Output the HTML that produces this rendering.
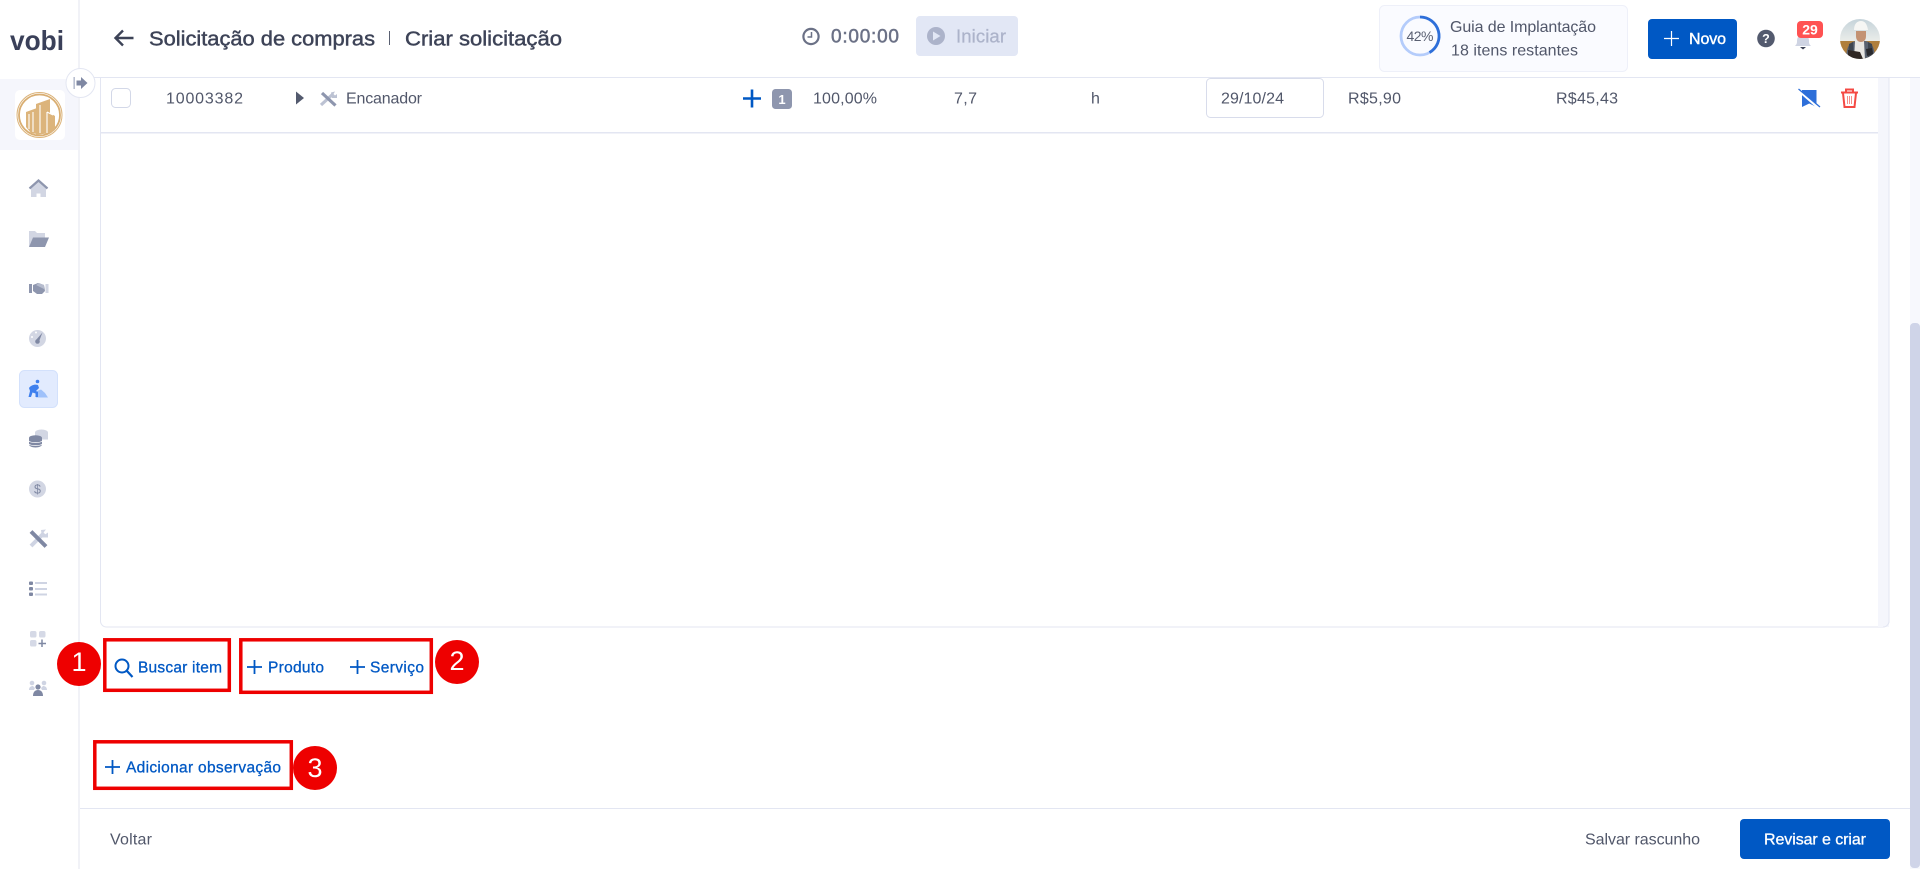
<!DOCTYPE html>
<html lang="pt-BR">
<head>
<meta charset="utf-8">
<title>Solicitação de compras</title>
<style>
html,body{margin:0;padding:0;width:1920px;height:869px;overflow:hidden;background:#fff}
svg{display:block}
text{font-family:"Liberation Sans",sans-serif;white-space:pre}
.t{font-size:16px;fill:#51576a}
.m{stroke-width:.45px}
.b{font-size:15.500px;fill:#0058c4;stroke:#0058c4;stroke-width:.3px}
.n{font-size:27px;fill:#fff;text-anchor:middle}
</style>
</head>
<body>
<svg width="1920" height="869" viewBox="0 0 1920 869" xmlns="http://www.w3.org/2000/svg">
<rect width="1920" height="869" fill="#fff"/>

<!-- sidebar -->
<rect x="78" y="0" width="2" height="869" fill="#f1f2f7"/>
<rect x="0" y="79" width="78" height="71" fill="#f5f6fc"/>
<text x="10" y="50" font-size="28" font-weight="bold" fill="#3a4059" textLength="54" lengthAdjust="spacingAndGlyphs">vobi</text>

<!-- company logo -->
<rect x="15" y="90" width="50" height="50" rx="5" fill="#fff"/>
<circle cx="39.500" cy="115" r="22.500" fill="none" stroke="#dcb47b" stroke-width="1"/>
<circle cx="39.500" cy="115" r="20.500" fill="none" stroke="#d9ae72" stroke-width="1.800"/>
<path d="M26 112l11-4 0 26-6-1-5-6zM36 104l14-5v14l5 3v14l-5 3-14 2z" fill="#dcb47b"/>
<path d="M29 114v15M33 112v20M40 105v28M47 112l6 3M47 112v21" stroke="#fff" stroke-width="1.100" fill="none"/>

<!-- sidebar icons -->
<g>
<path d="M31 187l7.500-6.500 7.500 6.500v10h-15z" fill="#d2d6e3"/>
<path d="M29.500 188.500l9-8 9 8" fill="none" stroke="#8e96ae" stroke-width="2.200"/>
<path d="M36.500 197v-3.500h4v3.500z" fill="#fff"/>
<path d="M29 231h6l2 2h8v5H33l-4 9z" fill="#d2d6e3"/>
<path d="M33 237.500h16l-4 9.500H29z" fill="#8e96ae"/>
<path d="M29 284h3v9h-3z" fill="#8e96ae"/><path d="M45.500 284h3v9h-3z" fill="#d2d6e3"/>
<path d="M33 285l5-2 6 2 1 6-3 3-5 0-4-3z" fill="#8e96ae"/>
<path d="M36 285l3-2 5 2v4l-4-2z" fill="#b5bbcd"/>
<circle cx="37.500" cy="338.500" r="8.500" fill="#d2d6e3"/>
<path d="M42.500 332.500l-3.500 9-3-1.500z" fill="#7f88a3"/><circle cx="37.500" cy="341.500" r="2.300" fill="#7f88a3"/>
<circle cx="32" cy="337" r="1" fill="#fff"/><circle cx="36" cy="332.500" r="1" fill="#fff"/>
<rect x="19.500" y="370.500" width="38" height="37" rx="5" fill="#e2ebfe" stroke="#d3e1fc"/>
<path d="M37 391l4-1.500 4 3.500 3 4.500H36z" fill="#9fc1fa"/>
<circle cx="37.500" cy="381.500" r="1.800" fill="#3f80ee"/>
<path d="M29 388c2-3 6-4 9-3l1 3-3 3 2 1v5h-2.500v-3.500l-3-1-1.500 4.500H28.500l1.500-6z" fill="#3f80ee"/>
<ellipse cx="41.500" cy="432.500" rx="6.500" ry="3" fill="#d2d6e3"/><rect x="35" y="432.500" width="13" height="7" fill="#d2d6e3"/>
<ellipse cx="35.500" cy="438" rx="6.500" ry="2.800" fill="#7f88a3"/>
<path d="M29 438v6.500c0 1.500 3 3 6.500 3s6.500-1.500 6.500-3V438" fill="#7f88a3"/>
<path d="M29 441c1 2 12 2 13 0M29 444c1 2 12 2 13 0" stroke="#fff" fill="none" stroke-width=".8"/>
<circle cx="37.500" cy="489" r="8.500" fill="#d2d6e3"/>
<text x="37.500" y="493.500" font-size="12.500" fill="#7f88a3" text-anchor="middle">$</text>
<path d="M31 546l13-13" stroke="#cfd4e3" stroke-width="4"/>
<path d="M41 530l5-.5-2.500 3 1.500 2 3-2 0 5-6 0z" fill="#cfd4e3"/>
<path d="M31 531.500l15 15" stroke="#7f88a3" stroke-width="4"/>
<rect x="29" y="581.500" width="4" height="3.500" rx="1" fill="#7f88a3"/><rect x="29" y="587" width="4" height="3.500" rx="1" fill="#7f88a3"/><rect x="29" y="592.500" width="4" height="3.500" rx="1" fill="#7f88a3"/>
<path d="M35 583h12M35 589h12M35 594.500h12" stroke="#cfd4e3" stroke-width="2"/>
<rect x="30" y="631" width="6.500" height="6.500" rx="1.800" fill="#d5d9e6"/><rect x="39" y="631" width="6.500" height="6.500" rx="1.800" fill="#d5d9e6"/>
<rect x="30" y="640" width="6.500" height="6.500" rx="1.800" fill="#d5d9e6"/>
<path d="M42 639.500v7.500M38.500 643.500h7.500" stroke="#7f88a3" stroke-width="1.500"/>
<circle cx="32" cy="683" r="2.300" fill="#cfd4e3"/><circle cx="44" cy="683" r="2.300" fill="#cfd4e3"/>
<path d="M29 690c0-3 2-4 4-4l2 2-1 2zM47 690c0-3-2-4-4-4l-2 2 1 2z" fill="#cfd4e3"/>
<circle cx="38" cy="687" r="2.600" fill="#7f88a3"/>
<path d="M33 696c0-4 2-6 5-6s5 2 5 6z" fill="#7f88a3"/>
</g>

<!-- header -->
<rect x="80" y="77" width="1840" height="1" fill="#e3e6f2"/>
<path d="M133.500 38h-17M123 30.500l-7.500 7.500 7.500 7.500" fill="none" stroke="#3d4357" stroke-width="2.400"/>
<text x="149" y="45.500" font-size="20.500" fill="#3d4357" stroke="#3d4357" class="m" textLength="226" lengthAdjust="spacingAndGlyphs">Solicitação de compras</text>
<rect x="389" y="31" width="1" height="14" fill="#5a6072"/>
<text x="405" y="45.500" font-size="20.500" fill="#3d4357" stroke="#3d4357" class="m" textLength="157" lengthAdjust="spacingAndGlyphs">Criar solicitação</text>

<circle cx="811" cy="36.500" r="7.600" fill="none" stroke="#6b7186" stroke-width="2.200"/>
<path d="M811.500 32v5h-4" fill="none" stroke="#6b7186" stroke-width="1.500"/>
<text x="831" y="42.500" font-size="19" fill="#6b7186" stroke="#6b7186" stroke-width=".5" textLength="68" lengthAdjust="spacing">0:00:00</text>
<rect x="916" y="16" width="102" height="40" rx="4" fill="#e2e7f5"/>
<circle cx="936" cy="36" r="9" fill="#acb3ca"/>
<path d="M933 31.500l7.500 4.500-7.500 4.500z" fill="#e2e7f5"/>
<text x="956" y="42.500" font-size="18.500" fill="#acb3ca" stroke="#acb3ca" stroke-width=".25" textLength="50" lengthAdjust="spacing">Iniciar</text>

<rect x="1379.500" y="5.500" width="248" height="66" rx="5" fill="#fafbff" stroke="#eef0f9"/>
<circle cx="1420" cy="36" r="19" fill="none" stroke="#b4ccfb" stroke-width="2.800"/>
<path d="M1420 17a19 19 0 0 1 9.500 35.500" fill="none" stroke="#2e6fd9" stroke-width="2.800"/>
<text x="1420" y="41" font-size="14" fill="#5a6072" text-anchor="middle" textLength="27" lengthAdjust="spacing">42%</text>
<text x="1450" y="32" class="t" textLength="146" lengthAdjust="spacing">Guia de Implantação</text>
<text x="1451" y="55.500" class="t" textLength="127" lengthAdjust="spacing">18 itens restantes</text>

<rect x="1648" y="19" width="89" height="40" rx="4" fill="#0058c4"/>
<path d="M1671.500 31v15M1664 38.500h15" stroke="#fff" stroke-width="1.200"/>
<text x="1689" y="44" font-size="16" fill="#fff" stroke="#fff" stroke-width=".4" textLength="37" lengthAdjust="spacing">Novo</text>

<circle cx="1766" cy="38.500" r="8.800" fill="#535a6e"/>
<text x="1766" y="43" font-size="12.500" font-weight="bold" fill="#fff" text-anchor="middle">?</text>

<path d="M1795 46c2-2 2-3 2-5 0-4 2-6 6-6s6 2 6 6c0 2 0 3 2 5z" fill="#cfd4e3"/>
<path d="M1800 47h6l-3 2.500z" fill="#3d4357"/>
<rect x="1797" y="21" width="26" height="17" rx="4" fill="#ff5252"/>
<text x="1810" y="34.500" font-size="14" font-weight="bold" fill="#fff" text-anchor="middle">29</text>

<!-- avatar -->
<defs>
<clipPath id="av"><circle cx="1860" cy="39" r="20"/></clipPath>
<linearGradient id="sky" x1="0" y1="0" x2="0" y2="1"><stop offset="0" stop-color="#c5d3da"/><stop offset="1" stop-color="#eceeea"/></linearGradient>
</defs>
<g clip-path="url(#av)">
<rect x="1840" y="19" width="40" height="23" fill="url(#sky)"/>
<rect x="1840" y="41" width="40" height="19" fill="#b07f3c"/>
<path d="M1846 60c0-12 3-18 10-19h9c7 1 10 7 10 19z" fill="#5a6270"/>
<path d="M1849 44l4-2 1 18h-6zM1868 42l4 2 2 16h-6z" fill="#3f4650"/>
<path d="M1855 41h9l1 19h-11z" fill="#e9e7e3"/>
<path d="M1848 50l12 2 3 7h-15z" fill="#2f2723"/>
<path d="M1866 49l6-1 1 6-6 2z" fill="#2a2a2e"/>
<path d="M1856 31h10v5c0 4-2 6-5 6s-5-2-5-6z" fill="#c39273"/>
<path d="M1854 30c0-6 3-9 7-9s6 3 7 9z" fill="#f6f6f4"/>
</g>

<!-- table -->
<path d="M100.500 78V621a6 6 0 0 0 6 6H1883a6 6 0 0 0 6-6V78" fill="none" stroke="#e3e6f2"/>
<rect x="1878" y="78" width="11" height="549" fill="#f5f6fc"/>
<path d="M1883 627a6 6 0 0 0 6-6V78" fill="none" stroke="#e3e6f2"/>
<rect x="101" y="132" width="1777" height="1.500" fill="#e3e6f2"/>

<rect x="111.500" y="88.500" width="19" height="19" rx="4" fill="#fff" stroke="#d3d8e8"/>
<text x="166" y="103.500" class="t" textLength="77" lengthAdjust="spacing">10003382</text>
<path d="M296 91.500l8 6.500-8 6.500z" fill="#535a6e"/>
<path d="M321 105l12-11" stroke="#bcc2d3" stroke-width="3.200"/>
<path d="M331 92.500l4-1-1.500 2.500 1.500 1.500 2-1.500 0 4-5 0z" fill="#bcc2d3"/>
<path d="M322 93l13.500 12.500" stroke="#8e96ae" stroke-width="3.200"/>
<text x="346" y="103.500" class="t" textLength="76" lengthAdjust="spacing">Encanador</text>
<path d="M752 89.500v18M743 98.500h18" stroke="#0058c4" stroke-width="2.600"/>
<rect x="772" y="89" width="20" height="20" rx="3.500" fill="#8e96ae"/>
<text x="782" y="104" font-size="13" font-weight="bold" fill="#fff" text-anchor="middle">1</text>
<text x="813" y="103.500" class="t" textLength="64" lengthAdjust="spacing">100,00%</text>
<text x="954" y="103.500" class="t" textLength="23" lengthAdjust="spacing">7,7</text>
<text x="1091" y="103.500" class="t" textLength="9" lengthAdjust="spacing">h</text>
<rect x="1206.500" y="78.500" width="117" height="39" rx="4" fill="#fff" stroke="#d8dceb"/>
<text x="1221" y="103.500" class="t" textLength="63" lengthAdjust="spacing">29/10/24</text>
<text x="1348" y="103.500" class="t" textLength="53" lengthAdjust="spacing">R$5,90</text>
<text x="1556" y="103.500" class="t" textLength="62" lengthAdjust="spacing">R$45,43</text>

<path d="M1802 90h14.500v17l-7.250-3.500-7.250 3.500z" fill="#2e6fd9"/>
<path d="M1799 91l20 17.500" stroke="#fff" stroke-width="2.200"/>
<path d="M1798.500 89l21.500 18" stroke="#2e6fd9" stroke-width="1.300"/>
<path d="M1841 92.500h17M1846 92v-2.500h7V92M1843 93l1.500 14h10l1.500-14" fill="none" stroke="#f44a44" stroke-width="2"/>
<path d="M1847.500 96v8M1849.500 96v8M1851.500 96v8" stroke="#f7908c" stroke-width="1"/>

<!-- actions -->
<circle cx="122" cy="666" r="6.500" fill="none" stroke="#0058c4" stroke-width="2"/>
<path d="M127 671l5.500 6" stroke="#0058c4" stroke-width="2.200"/>
<text x="138" y="672.500" class="b" textLength="84" lengthAdjust="spacing">Buscar item</text>
<path d="M254.500 660v14M247 667h15" stroke="#0058c4" stroke-width="1.800"/>
<text x="268" y="672.500" class="b" textLength="56" lengthAdjust="spacing">Produto</text>
<path d="M357.500 660v14M350 667h15" stroke="#0058c4" stroke-width="1.800"/>
<text x="370" y="672.500" class="b" textLength="54" lengthAdjust="spacing">Serviço</text>
<path d="M112.500 760v14M105 767h15" stroke="#0058c4" stroke-width="1.800"/>
<text x="126" y="772.500" class="b" textLength="155" lengthAdjust="spacing">Adicionar observação</text>

<!-- annotations -->
<rect x="104.800" y="639.800" width="124.500" height="50.500" fill="none" stroke="#ee0000" stroke-width="3.500"/>
<rect x="240.800" y="639.800" width="190.500" height="52.500" fill="none" stroke="#ee0000" stroke-width="3.500"/>
<rect x="94.800" y="741.800" width="196.500" height="46.500" fill="none" stroke="#ee0000" stroke-width="3.500"/>
<circle cx="79" cy="664" r="22" fill="#ee0000"/>
<circle cx="457" cy="662" r="22" fill="#ee0000"/>
<circle cx="315" cy="768" r="22" fill="#ee0000"/>
<text class="n" x="79" y="671">1</text>
<text class="n" x="457" y="670">2</text>
<text class="n" x="315" y="777">3</text>

<!-- footer -->
<rect x="80" y="808" width="1830" height="1" fill="#e3e6f2"/>
<text x="110" y="844.500" class="t" textLength="42" lengthAdjust="spacing">Voltar</text>
<text x="1585" y="844.500" class="t" textLength="115" lengthAdjust="spacing">Salvar rascunho</text>
<rect x="1740" y="819" width="150" height="40" rx="4" fill="#0058c4"/>
<text x="1764" y="844.500" font-size="16" fill="#fff" stroke="#fff" stroke-width=".3" textLength="102" lengthAdjust="spacing">Revisar e criar</text>

<!-- page scrollbar -->
<rect x="1910" y="78" width="10" height="791" fill="#f7f8fd"/>
<rect x="1910" y="323" width="10" height="545" rx="4" fill="#cfd4e8"/>

<!-- collapse toggle -->
<circle cx="80.500" cy="83" r="14.500" fill="#fff" stroke="#e3e6f2"/>
<rect x="73.500" y="77" width="1.300" height="12" fill="#a9b0c6"/>
<path d="M76.500 80.500h4.500v-3.500l6.500 6-6.500 6v-3.500h-4.500z" fill="#7f88a3"/>
</svg>
</body>
</html>
